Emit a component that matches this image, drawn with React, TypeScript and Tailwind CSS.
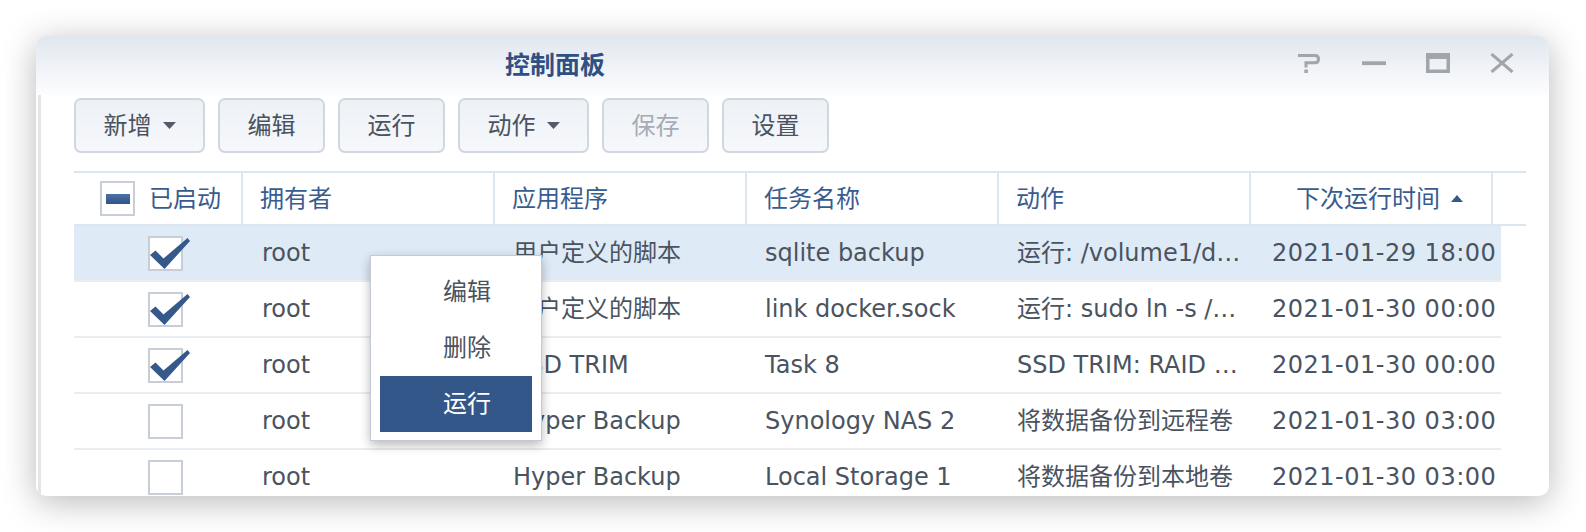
import React from "react";

type Row = {
  on: boolean;
  owner: string;
  app: string;
  task: string;
  action: string;
  next: string;
  selected?: boolean;
};

const ROWS: Row[] = [
  {
    on: true,
    owner: "root",
    app: "用户定义的脚本",
    task: "sqlite backup",
    action: "运行: /volume1/d…",
    next: "2021-01-29 18:00",
    selected: true,
  },
  {
    on: true,
    owner: "root",
    app: "用户定义的脚本",
    task: "link docker.sock",
    action: "运行: sudo ln -s /…",
    next: "2021-01-30 00:00",
  },
  {
    on: true,
    owner: "root",
    app: "SSD TRIM",
    task: "Task 8",
    action: "SSD TRIM: RAID …",
    next: "2021-01-30 00:00",
  },
  {
    on: false,
    owner: "root",
    app: "Hyper Backup",
    task: "Synology NAS 2",
    action: "将数据备份到远程卷",
    next: "2021-01-30 03:00",
  },
  {
    on: false,
    owner: "root",
    app: "Hyper Backup",
    task: "Local Storage 1",
    action: "将数据备份到本地卷",
    next: "2021-01-30 03:00",
  },
];

function CaretDown() {
  return (
    <svg width="13" height="7" viewBox="0 0 13 7">
      <path d="M0 0 H13 L6.5 7 Z" fill="#525b67" />
    </svg>
  );
}

function ToolButton({
  label,
  wide,
  disabled,
}: {
  label: string;
  wide?: boolean;
  disabled?: boolean;
}) {
  return (
    <button
      type="button"
      className={`flex h-[55px] items-center justify-center gap-[11px] rounded-[7px] border-2 border-[#cfd7e1] bg-gradient-to-b from-[#edf1f6] to-[#f6f8fb] ${
        wide ? "w-[131px]" : "w-[107px]"
      } ${disabled ? "text-[#a6acb5]" : "text-[#4a5360]"}`}
    >
      <span>{label}</span>
      {wide && <CaretDown />}
    </button>
  );
}

function Check({ on }: { on: boolean }) {
  return (
    <div className="relative h-[35px] w-[35px] border-2 border-[#c8ced7] bg-white">
      {on && (
        <svg
          className="absolute left-[-2px] top-[-2px]"
          width="44"
          height="36"
          viewBox="0 0 44 36"
        >
          <path
            d="M2 19 L7.5 14.5 L15.5 22.5 L39.5 2 L42 5 L16.5 33 Z"
            fill="#36598c"
          />
        </svg>
      )}
    </div>
  );
}

function TitleControls() {
  return (
    <div className="ml-auto flex gap-[40px] self-start pr-[35px] pt-[17px]">
      <svg width="24" height="20" viewBox="0 0 24 20">
        <path
          d="M0 2.5 H17 Q20.5 2.5 20.5 6 Q20.5 9.8 17 9.8 H8 V14.5"
          fill="none"
          stroke="#a1a5ac"
          strokeWidth="3"
        />
        <rect x="6.3" y="16.5" width="3.6" height="3.5" fill="#a1a5ac" />
      </svg>
      <svg width="24" height="20" viewBox="0 0 24 20">
        <rect x="0" y="8.3" width="24" height="3.8" fill="#a1a5ac" />
      </svg>
      <svg width="24" height="20" viewBox="0 0 24 20">
        <path
          d="M0 0 H24 V20 H0 Z M3.5 6 V16.5 H20.5 V6 Z"
          fill="#a1a5ac"
          fillRule="evenodd"
        />
      </svg>
      <svg width="24" height="20" viewBox="0 0 24 20">
        <path
          d="M1.5 1 L22.5 19 M22.5 1 L1.5 19"
          stroke="#a1a5ac"
          strokeWidth="3"
        />
      </svg>
    </div>
  );
}

export default function App() {
  return (
    <div className="h-[532px] w-[1586px] overflow-hidden bg-white pl-[36px] pt-[36px] font-['DejaVu_Sans','Noto_Sans_CJK_SC',sans-serif] text-[24px]">
      <div className="relative h-[460px] w-[1513px] overflow-hidden rounded-[10px] bg-white shadow-[0_6px_34px_rgba(0,0,0,0.28)]">
        {/* title bar */}
        <div className="flex h-[59px] items-center bg-gradient-to-b from-[#e1e7ef] to-[#fdfdfe]">
          <h1 className="pl-[469px] text-[25px] font-bold text-[#2f5083]">
            控制面板
          </h1>
          <TitleControls />
        </div>

        {/* body */}
        <div className="ml-[2px] h-[401px] border-l-[3px] border-[#e4e6e9] pl-[33px] pt-[3px]">
          <div className="flex gap-[13px]">
            <ToolButton label="新增" wide />
            <ToolButton label="编辑" />
            <ToolButton label="运行" />
            <ToolButton label="动作" wide />
            <ToolButton label="保存" disabled />
            <ToolButton label="设置" />
          </div>

          <div className="mt-[18px]">
            {/* header */}
            <div className="flex h-[55px] w-[1452px] border-y-2 border-[#dde5ee] text-[#385c8f]">
              <div className="flex w-[169px] items-center border-r-2 border-[#dde5ee] pl-[26px]">
                <div className="flex h-[35px] w-[35px] items-center justify-center border-2 border-[#c8ced7] bg-white">
                  <div className="h-[10px] w-[24px] bg-gradient-to-b from-[#4a70a6] to-[#315486]" />
                </div>
                <span className="ml-[14px]">已启动</span>
              </div>
              <div className="flex w-[252px] items-center border-r-2 border-[#dde5ee] pl-[17px]">
                拥有者
              </div>
              <div className="flex w-[252px] items-center border-r-2 border-[#dde5ee] pl-[17px]">
                应用程序
              </div>
              <div className="flex w-[252px] items-center border-r-2 border-[#dde5ee] pl-[17px]">
                任务名称
              </div>
              <div className="flex w-[252px] items-center border-r-2 border-[#dde5ee] pl-[17px]">
                动作
              </div>
              <div className="flex w-[242px] items-center border-r-2 border-[#dde5ee] pl-[45px]">
                <span>下次运行时间</span>
                <svg className="ml-[11px]" width="12" height="7" viewBox="0 0 12 7">
                  <path d="M6 0 L12 7 H0 Z" fill="#36598c" />
                </svg>
              </div>
            </div>

            {/* rows */}
            {ROWS.map((r, i) => (
              <div
                key={i}
                className={`flex h-[56px] w-[1427px] items-center border-b-2 border-[#e8edf2] text-[#4a5360] ${
                  r.selected ? "bg-[#dfeaf7]" : ""
                }`}
              >
                <div className="flex w-[169px] items-center pl-[74px]">
                  <Check on={r.on} />
                </div>
                <div className="w-[252px] whitespace-nowrap pl-[19px]">
                  {r.owner}
                </div>
                <div className="w-[252px] whitespace-nowrap pl-[18px]">
                  {r.app}
                </div>
                <div className="w-[252px] whitespace-nowrap pl-[18px]">
                  {r.task}
                </div>
                <div className="w-[252px] overflow-hidden whitespace-nowrap pl-[18px]">
                  {r.action}
                </div>
                <div className="w-[250px] whitespace-nowrap pl-[21px] tracking-[0.5px]">
                  {r.next}
                </div>
              </div>
            ))}
          </div>
        </div>

        {/* context menu */}
        <div className="absolute left-[334px] top-[219px] w-[172px] border border-[#c3cad4] bg-white px-[9px] py-[8px] shadow-[0_4px_10px_rgba(0,0,0,0.28)]">
          <div className="flex h-[56px] items-center pl-[63px] text-[#4a5360]">
            编辑
          </div>
          <div className="flex h-[56px] items-center pl-[63px] text-[#4a5360]">
            删除
          </div>
          <div className="flex h-[56px] items-center bg-[#34578a] pl-[63px] text-white">
            运行
          </div>
        </div>
      </div>
    </div>
  );
}
